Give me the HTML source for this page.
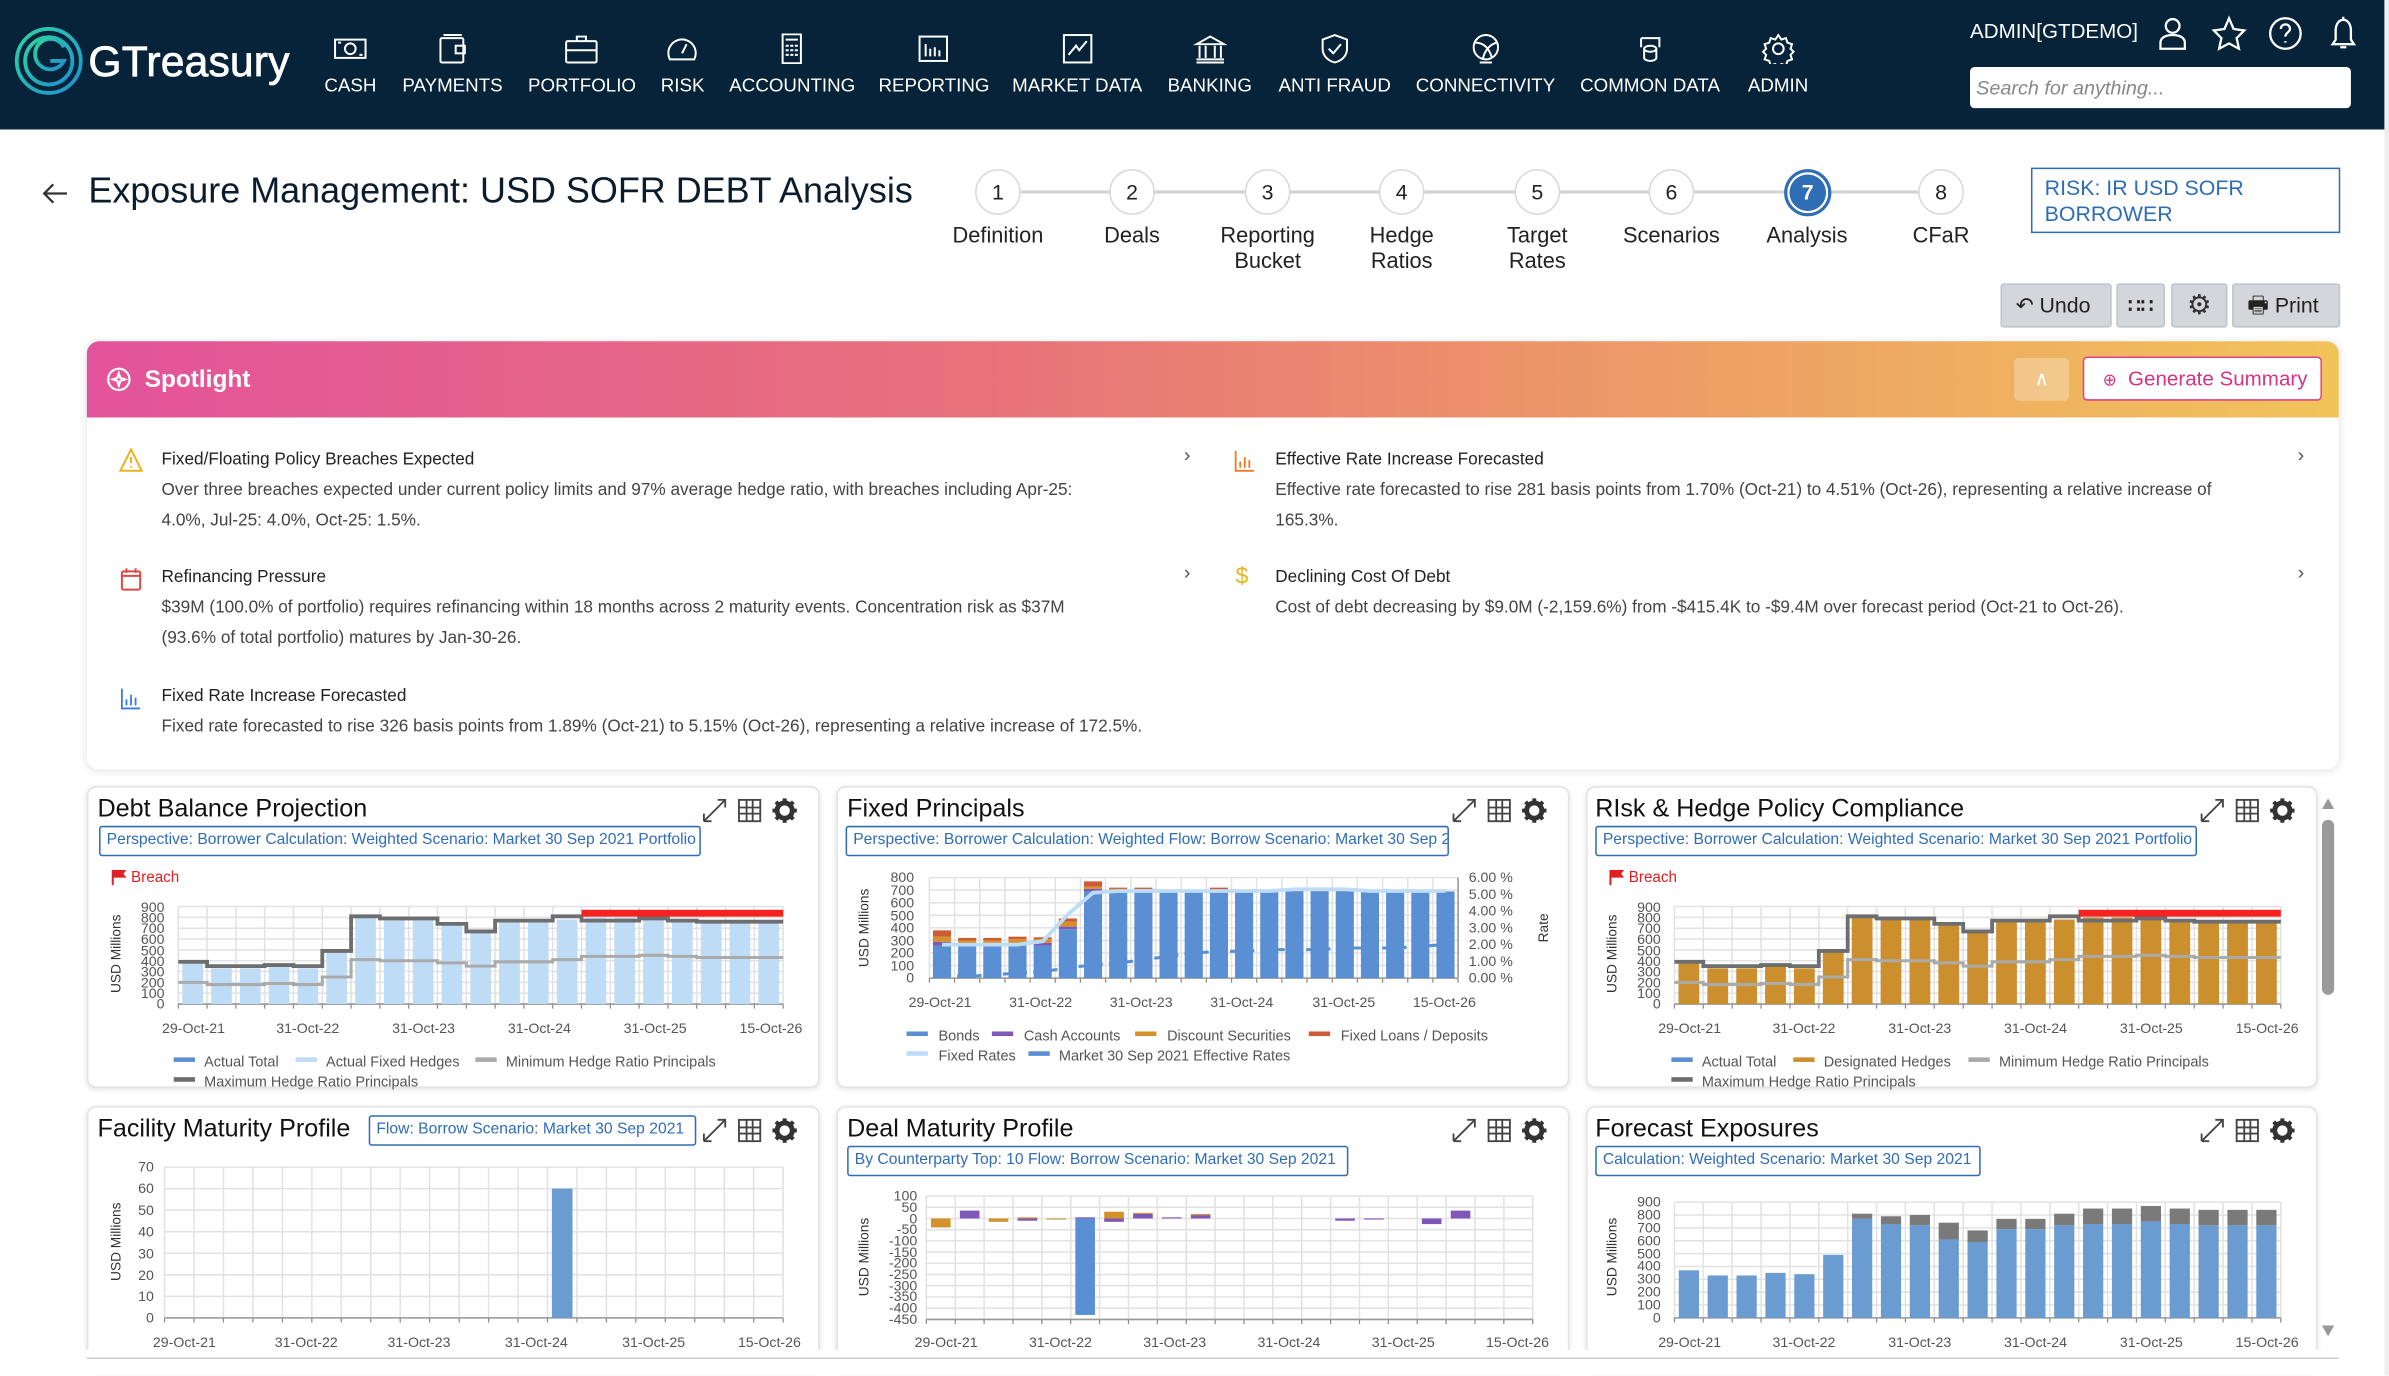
<!DOCTYPE html>
<html><head><meta charset="utf-8">
<style>
html,body{margin:0;padding:0;width:2389px;height:1375px;overflow:hidden;background:#fff;}
#w{position:absolute;left:0;top:0;width:1568px;height:903px;overflow:hidden;transform:scale(1.52360);transform-origin:0 0;font-family:"Liberation Sans",Arial,sans-serif;color:#222;}
.a{position:absolute;white-space:nowrap;}
.nav{position:absolute;left:0;top:0;width:1565px;height:85px;background:#062339;}
.ni{position:absolute;top:22px;transform:translateX(-50%);text-align:center;color:#fff;font-size:12.3px;}
.ni svg{display:block;margin:0 auto 7px;}
.step{position:absolute;top:111px;width:28px;height:28px;margin-left:-15px;border:1px solid #d9d9d9;border-radius:50%;background:#fff;text-align:center;line-height:28px;font-size:14px;color:#222;}
.sl{position:absolute;top:147px;transform:translateX(-50%);text-align:center;font-size:14.3px;line-height:16.5px;color:#222;}
.btn{position:absolute;top:186px;height:27px;background:#d3d7db;border:1px solid #bfc4c9;border-radius:2px;font-size:14px;color:#222;line-height:27px;}
.card{position:absolute;background:#fff;border:1px solid #e3e3e3;border-radius:6px;box-shadow:0 1px 4px rgba(0,0,0,.12);}
.ct{position:absolute;font-size:16.5px;color:#111;}
.pb{position:absolute;height:18px;border:1px solid #2f6db5;border-radius:2px;font-size:10.3px;color:#2f6db5;line-height:18px;padding-left:4px;overflow:hidden;white-space:nowrap;}
.it{position:absolute;font-size:11.3px;color:#222;}
.ib{position:absolute;font-size:11.3px;color:#444;line-height:19.5px;}
.chev{position:absolute;font-size:13px;color:#555;}
</style></head><body>
<div id="w">
<div class="nav"></div>
<svg class="a" style="left:9px;top:17px" width="46" height="46" viewBox="0 0 46 46" fill="none">
<defs><linearGradient id="lg" x1="0" y1="0" x2="1" y2="1"><stop offset="0" stop-color="#2fd3a0"/><stop offset="1" stop-color="#1e8fd0"/></linearGradient></defs>
<circle cx="23" cy="23" r="21" stroke="url(#lg)" stroke-width="2.5"/>
<circle cx="23" cy="23" r="15.5" stroke="url(#lg)" stroke-width="2.5"/>
<path d="M33 14 A10 10 0 1 0 33 23 H24" stroke="url(#lg)" stroke-width="2.5"/>
</svg>
<div class="a" style="left:58px;top:25px;font-size:28px;color:#fff;letter-spacing:0.1px;-webkit-text-stroke:0.5px #fff;">GTreasury</div>

<div class="ni" style="left:230px"><svg width="22" height="20" viewBox="0 0 22 20" fill="none" stroke="#fff" stroke-width="1.3"><rect x="1" y="4" width="20" height="12"/><circle cx="11" cy="10" r="3.5"/><path d="M3 6h2M17 14h2"/></svg>CASH</div>
<div class="ni" style="left:297px"><svg width="22" height="20" viewBox="0 0 22 20" fill="none" stroke="#fff" stroke-width="1.3"><rect x="3" y="3" width="15" height="16" rx="1"/><rect x="13" y="8" width="6" height="5"/><path d="M5 1h12"/></svg>PAYMENTS</div>
<div class="ni" style="left:382px"><svg width="22" height="20" viewBox="0 0 22 20" fill="none" stroke="#fff" stroke-width="1.3"><rect x="1" y="5" width="20" height="14" rx="1"/><path d="M8 5V2h6v3M1 11h20"/></svg>PORTFOLIO</div>
<div class="ni" style="left:448px"><svg width="22" height="20" viewBox="0 0 22 20" fill="none" stroke="#fff" stroke-width="1.3"><path d="M3 17a9 9 0 1 1 16 0z"/><path d="M11 13l3-6"/></svg>RISK</div>
<div class="ni" style="left:520px"><svg width="22" height="20" viewBox="0 0 22 20" fill="none" stroke="#fff" stroke-width="1.3"><rect x="5" y="0.5" width="12" height="19"/><path d="M7 4h8M7 8h2M10 8h2M13 8h2M7 11h2M10 11h2M13 11h2M7 14h2M10 14h2M13 14h2"/></svg>ACCOUNTING</div>
<div class="ni" style="left:613px"><svg width="22" height="20" viewBox="0 0 22 20" fill="none" stroke="#fff" stroke-width="1.3"><rect x="2" y="2" width="18" height="16"/><path d="M6 15V7M9 15v-5M12 15V9M15 15v-4"/></svg>REPORTING</div>
<div class="ni" style="left:707px"><svg width="22" height="20" viewBox="0 0 22 20" fill="none" stroke="#fff" stroke-width="1.3"><rect x="2" y="1" width="18" height="18"/><path d="M5 14l5-6 2 3 5-6"/></svg>MARKET DATA</div>
<div class="ni" style="left:794px"><svg width="22" height="20" viewBox="0 0 22 20" fill="none" stroke="#fff" stroke-width="1.3"><path d="M2 7L11 2l9 5zM4 8v8M8 8v8M14 8v8M18 8v8M2 17h18M2 19h18"/></svg>BANKING</div>
<div class="ni" style="left:876px"><svg width="22" height="20" viewBox="0 0 22 20" fill="none" stroke="#fff" stroke-width="1.3"><path d="M11 1l8 3v6c0 5-4 8-8 9-4-1-8-4-8-9V4z"/><path d="M7 10l3 3 5-6"/></svg>ANTI FRAUD</div>
<div class="ni" style="left:975px"><svg width="22" height="20" viewBox="0 0 22 20" fill="none" stroke="#fff" stroke-width="1.3"><circle cx="11" cy="9" r="8"/><path d="M4 6c5 0 9 3 11 10M18 6c-4 1-8 5-9 11M7 19h8"/></svg>CONNECTIVITY</div>
<div class="ni" style="left:1083px"><svg width="22" height="20" viewBox="0 0 22 20" fill="none" stroke="#fff" stroke-width="1.3"><ellipse cx="11" cy="10" rx="4" ry="2"/><path d="M7 10v6c0 1 2 2 4 2s4-1 4-2v-6M5 3h12v6M5 3v6"/></svg>COMMON DATA</div>
<div class="ni" style="left:1167px"><svg width="22" height="20" viewBox="0 0 22 20" fill="none" stroke="#fff" stroke-width="1.3"><circle cx="11" cy="10" r="3.5"/><path d="M11 1l2 3 3-1 1 3 3 1-1 3 2 2-2 2 1 3-3 1-1 3-3-1-2 3-2-3-3 1-1-3-3-1 1-3-2-2 2-2-1-3 3-1 1-3 3 1z"/></svg>ADMIN</div>

<div class="a" style="left:1293px;top:13px;font-size:13.5px;color:#fff;">ADMIN[GTDEMO]</div>
<svg class="a" style="left:1415px;top:10px" width="135" height="24" viewBox="0 0 135 24" fill="none" stroke="#fff" stroke-width="1.5">
<circle cx="11" cy="7" r="4.5"/><path d="M3 22v-4c0-3 3-5 8-5s8 2 8 5v4z"/>
<path d="M48 2l3 7 7 1-5 5 1.5 7-6.5-3.5L41.5 22 43 15l-5-5 7-1z"/>
<circle cx="85" cy="12" r="10"/><path d="M82 9c0-2 1.5-3 3-3s3 1 3 3c0 2-3 2.5-3 5M85 17v1"/>
<path d="M116 19h14l-2-3v-6c0-4-2-7-5-7s-5 3-5 7v6zM121 21h4M123 1v2"/>
</svg>
<div class="a" style="left:1293px;top:44px;width:250px;height:27px;background:#fff;border-radius:3px;"></div>
<div class="a" style="left:1297px;top:50px;font-size:13px;color:#888;font-style:italic;">Search for anything...</div>

<svg class="a" style="left:27px;top:119px" width="18" height="16" viewBox="0 0 18 16" fill="none" stroke="#333" stroke-width="1.5"><path d="M8 2L2 8l6 6M2 8h15"/></svg>
<div class="a" style="left:58px;top:113px;font-size:23.6px;color:#0b1c2c;">Exposure Management: USD SOFR DEBT Analysis</div>

<div class="a" style="left:670px;top:125px;width:590px;height:2px;background:#d2d2d2;"></div>
<div class="step" style="left:655px">1</div>
<div class="step" style="left:743px">2</div>
<div class="step" style="left:832px">3</div>
<div class="step" style="left:920px">4</div>
<div class="step" style="left:1009px">5</div>
<div class="step" style="left:1097px">6</div>
<div class="step" style="left:1186px;background:#2f6db5;color:#fff;border:2px solid #2f6db5;box-shadow:inset 0 0 0 1.5px #fff;width:27px;height:27px;line-height:27px;font-weight:bold;">7</div>
<div class="step" style="left:1274px">8</div>
<div class="sl" style="left:655px">Definition</div>
<div class="sl" style="left:743px">Deals</div>
<div class="sl" style="left:832px">Reporting<br>Bucket</div>
<div class="sl" style="left:920px">Hedge<br>Ratios</div>
<div class="sl" style="left:1009px">Target<br>Rates</div>
<div class="sl" style="left:1097px">Scenarios</div>
<div class="sl" style="left:1186px">Analysis</div>
<div class="sl" style="left:1274px">CFaR</div>

<div class="a" style="left:1333px;top:110px;width:201px;height:41px;border:1px solid #2f6db5;"></div>
<div class="a" style="left:1342px;top:115px;font-size:14px;line-height:16.5px;color:#2f6db5;">RISK: IR USD SOFR<br>BORROWER</div>

<div class="btn" style="left:1313px;width:71px;"><span style="margin-left:9px;">&#x21B6;</span> Undo</div>
<div class="btn" style="left:1389px;width:30px;text-align:center;font-weight:bold;font-size:13px;">&#x2237;&#x2237;</div>
<div class="btn" style="left:1425px;width:35px;text-align:center;font-size:18px;color:#333;">&#x2699;</div>
<div class="btn" style="left:1465px;width:69px;"><span style="margin-left:9px;font-size:15px;">&#x1F5B6;</span> Print</div>

<div class="card" style="left:57px;top:224px;width:1478px;height:281px;border-radius:8px;border:none;box-shadow:0 1px 6px rgba(0,0,0,.12);"></div>
<div class="a" style="left:57px;top:224px;width:1478px;height:50px;border-radius:8px 8px 0 0;background:linear-gradient(90deg,#e3539b 0%,#e8727a 40%,#ed9c66 70%,#f1c45a 100%);"></div>
<svg class="a" style="left:70px;top:241px" width="16" height="16" viewBox="0 0 16 16" fill="none" stroke="#fff" stroke-width="1.4"><circle cx="8" cy="8" r="7"/><path d="M8 4l1 3 3 1-3 1-1 3-1-3-3-1 3-1z"/></svg>
<div class="a" style="left:95px;top:241px;font-size:16px;font-weight:bold;color:#fff;">Spotlight</div>
<div class="a" style="left:1322px;top:235px;width:36px;height:28px;background:rgba(255,255,255,.28);border-radius:3px;color:#fff;text-align:center;font-size:13px;line-height:28px;">&#x2227;</div>
<div class="a" style="left:1367px;top:234px;width:155px;height:27px;background:#fff;border:1px solid #e0428a;border-radius:3px;"></div>
<div class="a" style="left:1380px;top:241px;font-size:13.5px;color:#d63384;"><span style="font-size:11px;">&#x2295;</span>&nbsp; Generate Summary</div>

<svg class="a" style="left:78px;top:294px" width="16" height="16" viewBox="0 0 16 16" fill="none" stroke="#e9b320" stroke-width="1.3"><path d="M8 1l7 14H1z"/><path d="M8 6v4M8 12v1"/></svg>
<div class="it" style="left:106px;top:296px">Fixed/Floating Policy Breaches Expected</div>
<div class="ib" style="left:106px;top:313px;width:650px">Over three breaches expected under current policy limits and 97% average hedge ratio, with breaches including Apr-25:<br>4.0%, Jul-25: 4.0%, Oct-25: 1.5%.</div>
<div class="chev" style="left:777px;top:291px">&#x203A;</div>
<svg class="a" style="left:79px;top:372px" width="14" height="16" viewBox="0 0 14 16" fill="none" stroke="#e04848" stroke-width="1.3"><rect x="1" y="3" width="12" height="12" rx="1"/><path d="M1 6h12M4 1v3M10 1v3"/></svg>
<div class="it" style="left:106px;top:373px">Refinancing Pressure</div>
<div class="ib" style="left:106px;top:390px;width:650px">$39M (100.0% of portfolio) requires refinancing within 18 months across 2 maturity events. Concentration risk as $37M<br>(93.6% of total portfolio) matures by Jan-30-26.</div>
<div class="chev" style="left:777px;top:368px">&#x203A;</div>
<svg class="a" style="left:79px;top:451px" width="14" height="15" viewBox="0 0 14 15" fill="none" stroke="#3b7be0" stroke-width="1.2"><path d="M1 1v13h12M4 12V8M7 12V5M10 12V7"/></svg>
<div class="it" style="left:106px;top:451px">Fixed Rate Increase Forecasted</div>
<div class="ib" style="left:106px;top:468px;">Fixed rate forecasted to rise 326 basis points from 1.89% (Oct-21) to 5.15% (Oct-26), representing a relative increase of 172.5%.</div>

<svg class="a" style="left:810px;top:295px" width="14" height="15" viewBox="0 0 14 15" fill="none" stroke="#ee7a22" stroke-width="1.2"><path d="M1 1v13h12M4 12V8M7 12V5M10 12V7"/></svg>
<div class="it" style="left:837px;top:296px">Effective Rate Increase Forecasted</div>
<div class="ib" style="left:837px;top:313px;width:660px">Effective rate forecasted to rise 281 basis points from 1.70% (Oct-21) to 4.51% (Oct-26), representing a relative increase of<br>165.3%.</div>
<div class="chev" style="left:1508px;top:291px">&#x203A;</div>
<div class="a" style="left:811px;top:370px;font-size:15px;color:#e9b320;">$</div>
<div class="it" style="left:837px;top:373px">Declining Cost Of Debt</div>
<div class="ib" style="left:837px;top:390px;">Cost of debt decreasing by $9.0M (-2,159.6%) from -$415.4K to -$9.4M over forecast period (Oct-21 to Oct-26).</div>
<div class="chev" style="left:1508px;top:368px">&#x203A;</div>

<div class="card" style="left:57px;top:516px;width:479px;height:196px;"></div>
<div class="card" style="left:549px;top:516px;width:479px;height:196px;"></div>
<div class="card" style="left:1041px;top:516px;width:478px;height:196px;"></div>
<div class="card" style="left:57px;top:726px;width:479px;height:175px;"></div>
<div class="card" style="left:549px;top:726px;width:479px;height:175px;"></div>
<div class="card" style="left:1041px;top:726px;width:478px;height:175px;"></div>

<div class="ct" style="left:64px;top:522px">Debt Balance Projection</div>
<div class="ct" style="left:556px;top:522px">Fixed Principals</div>
<div class="ct" style="left:1047px;top:522px">RIsk &amp; Hedge Policy Compliance</div>
<div class="ct" style="left:64px;top:732px">Facility Maturity Profile</div>
<div class="ct" style="left:556px;top:732px">Deal Maturity Profile</div>
<div class="ct" style="left:1047px;top:732px">Forecast Exposures</div>

<div class="pb" style="left:65px;top:542px;width:389px;">Perspective: Borrower Calculation: Weighted Scenario: Market 30 Sep 2021 Portfolio</div>
<div class="pb" style="left:555px;top:542px;width:390px;">Perspective: Borrower Calculation: Weighted Flow: Borrow Scenario: Market 30 Sep 2021</div>
<div class="pb" style="left:1047px;top:542px;width:389px;">Perspective: Borrower Calculation: Weighted Scenario: Market 30 Sep 2021 Portfolio</div>
<div class="pb" style="left:242px;top:732px;width:209px;">Flow: Borrow Scenario: Market 30 Sep 2021</div>
<div class="pb" style="left:556px;top:752px;width:323px;">By Counterparty Top: 10 Flow: Borrow Scenario: Market 30 Sep 2021</div>
<div class="pb" style="left:1047px;top:752px;width:247px;">Calculation: Weighted Scenario: Market 30 Sep 2021</div>

<svg id="ch" class="a" style="left:0;top:0" width="1568" height="903" viewBox="0 0 1568 903" font-family="Liberation Sans, Arial, sans-serif">
<defs>
<g id="icons" fill="none" stroke="#444" stroke-width="1.2">
<path d="M0 16L14 2M9 2h5v5M0 16v-5M0 16h5"/>
<rect x="23" y="2" width="14" height="14"/><path d="M23 7h14M23 11h14M28 2v14M32 2v14"/>
<circle cx="53" cy="9" r="5" stroke-width="3.2" stroke="#333"/><circle cx="53" cy="9" r="1.5" fill="#fff" stroke="none"/>
<path d="M53 1v3M53 14v3M45 9h3M58 9h3M47.3 3.3l2.2 2.2M56.5 12.5l2.2 2.2M47.3 14.7l2.2-2.2M56.5 5.5l2.2-2.2" stroke="#333" stroke-width="2.6"/>
</g>
</defs>
<use href="#icons" x="462" y="523"/><use href="#icons" x="954" y="523"/><use href="#icons" x="1445" y="523"/>
<use href="#icons" x="462" y="733"/><use href="#icons" x="954" y="733"/><use href="#icons" x="1445" y="733"/>
<g id="gfx"></g>
<g font-size="10" fill="#e02020"><path d="M74 571v10" stroke="#e02020" stroke-width="1.3"/><path d="M74 571h9l-2 2.5 2 2.5h-9z" fill="#e02020"/><text x="86" y="579">Breach</text>
<path d="M1057 571v10" stroke="#e02020" stroke-width="1.3"/><path d="M1057 571h9l-2 2.5 2 2.5h-9z" fill="#e02020"/><text x="1069" y="579">Breach</text></g>
<g font-size="9.3" fill="#555" text-anchor="end">
<text x="108" y="662">0</text><text x="108" y="655">100</text><text x="108" y="648">200</text><text x="108" y="641">300</text><text x="108" y="634">400</text><text x="108" y="627">500</text><text x="108" y="619.5">600</text><text x="108" y="612.5">700</text><text x="108" y="605.5">800</text><text x="108" y="598.5">900</text>
<text x="1090" y="662">0</text><text x="1090" y="655">100</text><text x="1090" y="648">200</text><text x="1090" y="641">300</text><text x="1090" y="634">400</text><text x="1090" y="627">500</text><text x="1090" y="619.5">600</text><text x="1090" y="612.5">700</text><text x="1090" y="605.5">800</text><text x="1090" y="598.5">900</text>
<text x="600" y="645">0</text><text x="600" y="637">100</text><text x="600" y="628.5">200</text><text x="600" y="620.5">300</text><text x="600" y="612">400</text><text x="600" y="604">500</text><text x="600" y="595.5">600</text><text x="600" y="587.5">700</text><text x="600" y="579">800</text>
<text x="101" y="868">0</text><text x="101" y="854">10</text><text x="101" y="840">20</text><text x="101" y="826">30</text><text x="101" y="811.5">40</text><text x="101" y="797.5">50</text><text x="101" y="783">60</text><text x="101" y="769">70</text>
<text x="602" y="788">100</text><text x="602" y="795.5">50</text><text x="602" y="803">0</text><text x="602" y="810">-50</text><text x="602" y="817.5">-100</text><text x="602" y="825">-150</text><text x="602" y="832">-200</text><text x="602" y="839.5">-250</text><text x="602" y="847">-300</text><text x="602" y="854">-350</text><text x="602" y="861.5">-400</text><text x="602" y="869">-450</text>
<text x="1090" y="868">0</text><text x="1090" y="859.5">100</text><text x="1090" y="851">200</text><text x="1090" y="842.5">300</text><text x="1090" y="834">400</text><text x="1090" y="826">500</text><text x="1090" y="817.5">600</text><text x="1090" y="809">700</text><text x="1090" y="800.5">800</text><text x="1090" y="792">900</text>
</g>
<g font-size="9.3" fill="#555">
<text x="964" y="645">0.00 %</text><text x="964" y="634">1.00 %</text><text x="964" y="623">2.00 %</text><text x="964" y="612">3.00 %</text><text x="964" y="601">4.00 %</text><text x="964" y="590">5.00 %</text><text x="964" y="579">6.00 %</text>
</g>
<g font-size="9.3" fill="#555" text-anchor="middle">
<text x="127" y="678">29-Oct-21</text><text x="202" y="678">31-Oct-22</text><text x="278" y="678">31-Oct-23</text><text x="354" y="678">31-Oct-24</text><text x="430" y="678">31-Oct-25</text><text x="506" y="678">15-Oct-26</text>
<text x="1109" y="678">29-Oct-21</text><text x="1184" y="678">31-Oct-22</text><text x="1260" y="678">31-Oct-23</text><text x="1336" y="678">31-Oct-24</text><text x="1412" y="678">31-Oct-25</text><text x="1488" y="678">15-Oct-26</text>
<text x="617" y="661">29-Oct-21</text><text x="683" y="661">31-Oct-22</text><text x="749" y="661">31-Oct-23</text><text x="815" y="661">31-Oct-24</text><text x="882" y="661">31-Oct-25</text><text x="948" y="661">15-Oct-26</text>
<text x="121" y="884">29-Oct-21</text><text x="201" y="884">31-Oct-22</text><text x="275" y="884">31-Oct-23</text><text x="352" y="884">31-Oct-24</text><text x="429" y="884">31-Oct-25</text><text x="505" y="884">15-Oct-26</text>
<text x="621" y="884">29-Oct-21</text><text x="696" y="884">31-Oct-22</text><text x="771" y="884">31-Oct-23</text><text x="846" y="884">31-Oct-24</text><text x="921" y="884">31-Oct-25</text><text x="996" y="884">15-Oct-26</text>
<text x="1109" y="884">29-Oct-21</text><text x="1184" y="884">31-Oct-22</text><text x="1260" y="884">31-Oct-23</text><text x="1336" y="884">31-Oct-24</text><text x="1412" y="884">31-Oct-25</text><text x="1488" y="884">15-Oct-26</text>
</g>
<g font-size="9" fill="#333" text-anchor="middle">
<text transform="translate(79,626) rotate(-90)">USD Millions</text>
<text transform="translate(1061,626) rotate(-90)">USD Millions</text>
<text transform="translate(570,609) rotate(-90)">USD Millions</text>
<text transform="translate(1016,609) rotate(-90)">Rate</text>
<text transform="translate(79,815) rotate(-90)">USD Millions</text>
<text transform="translate(570,825) rotate(-90)">USD Millions</text>
<text transform="translate(1061,825) rotate(-90)">USD Millions</text>
</g>
<g font-size="9.5" fill="#555">
<rect x="114" y="694" width="14" height="3" fill="#5b8fd4"/><text x="134" y="700">Actual Total</text>
<rect x="194" y="694" width="14" height="3" fill="#bfdcf7"/><text x="214" y="700">Actual Fixed Hedges</text>
<rect x="312" y="694" width="14" height="3" fill="#aaa"/><text x="332" y="700">Minimum Hedge Ratio Principals</text>
<rect x="114" y="707" width="14" height="3" fill="#6d6e70"/><text x="134" y="713">Maximum Hedge Ratio Principals</text>
<rect x="1097" y="694" width="14" height="3" fill="#5b8fd4"/><text x="1117" y="700">Actual Total</text>
<rect x="1177" y="694" width="14" height="3" fill="#cc8f2e"/><text x="1197" y="700">Designated Hedges</text>
<rect x="1292" y="694" width="14" height="3" fill="#aaa"/><text x="1312" y="700">Minimum Hedge Ratio Principals</text>
<rect x="1097" y="707" width="14" height="3" fill="#6d6e70"/><text x="1117" y="713">Maximum Hedge Ratio Principals</text>
<rect x="595" y="677" width="14" height="3" fill="#5b8fd4"/><text x="616" y="683">Bonds</text>
<rect x="651" y="677" width="14" height="3" fill="#7e57b8"/><text x="672" y="683">Cash Accounts</text>
<rect x="745" y="677" width="14" height="3" fill="#d4912a"/><text x="766" y="683">Discount Securities</text>
<rect x="859" y="677" width="14" height="3" fill="#cf5a36"/><text x="880" y="683">Fixed Loans / Deposits</text>
<rect x="595" y="690" width="14" height="3" fill="#bcdcf7"/><text x="616" y="696">Fixed Rates</text>
<rect x="675" y="690" width="14" height="3" fill="#5b8fd4"/><text x="695" y="696">Market 30 Sep 2021 Effective Rates</text>
</g>
<rect x="0" y="886" width="1568" height="60" fill="#fff"/>
<rect x="57" y="891" width="1478" height="1" fill="#ccc"/>
<path d="M1524 531l4-7 4 7z" fill="#999"/><rect x="1524" y="538" width="8" height="115" rx="4" fill="#9a9a9a"/><path d="M1524 870l4 7 4-7z" fill="#999"/>
<rect x="1565" y="0" width="3" height="903" fill="#eee"/>
</svg>
</div>
<script>
(function(){
var g=document.getElementById('gfx'),NS='http://www.w3.org/2000/svg';
function el(t,a){var e=document.createElementNS(NS,t);for(var k in a)e.setAttribute(k,a[k]);g.appendChild(e);return e;}
function frame(L,R,T,B,n,hn){var sw=(R-L)/n;
 for(var i=0;i<=hn;i++){var y=T+(B-T)*i/hn;el('line',{x1:L,x2:R,y1:y,y2:y,stroke:'#e2e2e2','stroke-width':1});}
 for(var i=0;i<=n;i++){var x=L+sw*i;el('line',{x1:x,x2:x,y1:T,y2:B,stroke:'#e2e2e2','stroke-width':1});el('line',{x1:x,x2:x,y1:B,y2:B+3,stroke:'#888','stroke-width':0.8});}
 el('line',{x1:L,x2:R,y1:B,y2:B,stroke:'#999','stroke-width':1});return sw;}
function stack(L,T,B,sw,vmin,vmax,data,cols,bw){var z=B-(0-vmin)/(vmax-vmin)*(B-T),k=(B-T)/(vmax-vmin);
 data.forEach(function(s,i){var x=L+sw*i+sw*(1-bw)/2,up=z,dn=z;s.forEach(function(v,j){if(!v)return;var h=Math.abs(v)*k;if(v>0){up-=h;el('rect',{x:x,y:up,width:sw*bw,height:h,fill:cols[j]});}else{el('rect',{x:x,y:dn,width:sw*bw,height:h,fill:cols[j]});dn+=h;}});});}
function step(L,B,T,sw,max,vals,col,w){var d='';vals.forEach(function(v,i){var y=B-v/max*(B-T);d+=(i?'L':'M')+(L+sw*i)+' '+y+'L'+(L+sw*(i+1))+' '+y;});el('path',{d:d,fill:'none',stroke:col,'stroke-width':w});}
function line(L,B,T,sw,max,vals,col,w,dash){var d='';vals.forEach(function(v,i){d+=(i?'L':'M')+(L+sw*(i+0.5))+' '+(B-v/max*(B-T));});var a={d:d,fill:'none',stroke:col,'stroke-width':w};if(dash)a['stroke-dasharray']=dash;el('path',a);}
var bal=[380,330,330,350,330,480,800,780,780,730,660,760,760,780,800,800,800,760,760,760,760];
var mx=[390,350,350,360,350,490,810,790,790,740,670,770,770,810,770,770,790,770,760,760,760];
var mn=[200,180,180,190,180,250,410,400,400,380,350,390,390,410,440,440,450,440,430,430,430];
[[117,514,'#bfdcf7'],[1099,1497,'#cc8f2e']].forEach(function(c){var L=c[0],R=c[1],T=595,B=659;var sw=frame(L,R,T,B,21,9);
 stack(L,T,B,sw,0,900,bal.map(function(v){return [v];}),[c[2]],0.72);
 step(L,B,T,sw,900,mn,'#aaaaaa',2);step(L,B,T,sw,900,mx,'#6d6e70',2.5);
 el('rect',{x:L+sw*14,y:B-870/900*(B-T),width:sw*7,height:4.5,fill:'#f52222'});});
(function(){var L=610,R=957,T=576,B=642;var sw=frame(L,R,T,B,21,8);
 var d=[[260,30,40,50],[260,0,40,20],[260,0,40,20],[260,0,50,20],[260,20,30,15],[390,20,40,25],[690,20,20,40],[700,0,10,10],[700,0,10,10],[690,0,0,0],[690,0,0,0],[690,0,0,30],[690,0,0,0],[690,0,0,5],[690,0,0,15],[690,0,0,10],[690,0,0,15],[690,0,0,5],[690,0,0,0],[690,0,0,0],[690,0,0,0]];
 stack(L,T,B,sw,0,800,d,['#5b8fd4','#7e57b8','#d4912a','#cf5a36'],0.72);
 line(L,B,T,sw,6,[2.0,2.0,2.0,2.0,2.2,3.8,5.1,5.2,5.2,5.2,5.2,5.2,5.2,5.2,5.3,5.3,5.3,5.2,5.2,5.2,5.2],'#bcdcf7',2.5);
 line(L,B,T,sw,6,[0.2,0.1,0.2,0.3,0.4,0.6,0.8,0.9,1.1,1.3,1.5,1.6,1.6,1.7,1.7,1.7,1.8,1.8,1.8,1.9,2.0],'#5b8fd4',2,'6 4');
 el('line',{x1:R,x2:R,y1:T,y2:B,stroke:'#999','stroke-width':1});})();
(function(){var L=108,R=514,T=766,B=865;var sw=frame(L,R,T,B,21,7);var d=[];for(var i=0;i<21;i++)d.push([i==13?60:0]);stack(L,T,B,sw,0,70,d,['#6a9bd1'],0.7);})();
(function(){var L=608,R=1006,T=785,B=866;var sw=frame(L,R,T,B,21,11);
 var d=[[0,0,-40],[0,35,0],[0,0,-15],[0,-10,5],[0,0,-5],[-430,5,0],[0,-15,30],[0,20,5],[0,5,0],[0,15,5],[0,0,0],[0,0,0],[0,0,0],[0,0,0],[0,-10,0],[0,-5,0],[0,0,0],[0,-25,0],[0,35,0],[0,0,0],[0,0,0]];
 stack(L,T,B,sw,-450,100,d,['#5b8fd4','#7e57b8','#d4912a'],0.68);})();
(function(){var L=1099,R=1497,T=789,B=865;var sw=frame(L,R,T,B,21,9);
 var b=[370,330,330,350,340,490,770,730,720,610,590,690,690,720,730,730,750,730,720,720,720];
 var t=[370,330,330,350,340,490,810,790,800,740,680,770,770,810,850,850,870,850,840,840,840];
 stack(L,T,B,sw,0,900,b.map(function(v,i){return [v,t[i]-v];}),['#6a9bd1','#7a7a7a'],0.7);})();
})();
</script>
</body></html>
